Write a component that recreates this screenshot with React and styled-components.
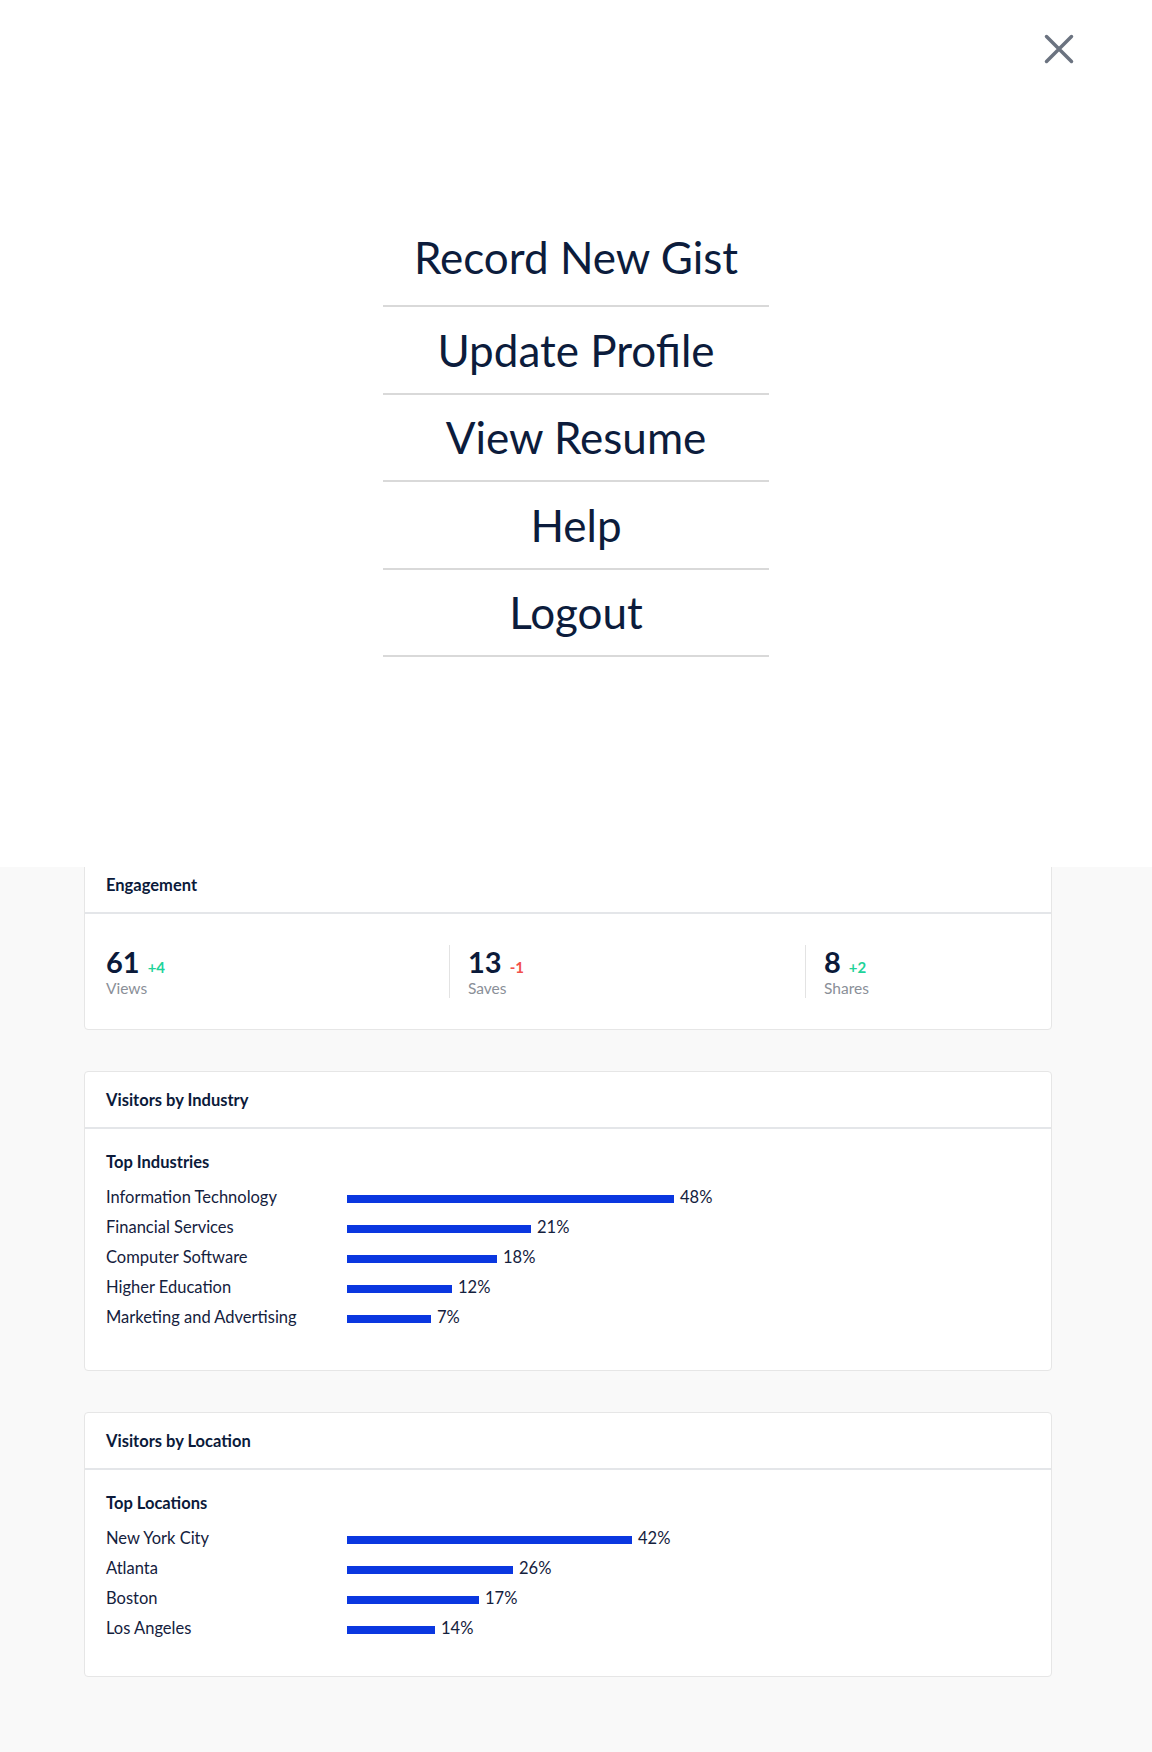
import React from "react";
import styled, { createGlobalStyle } from "styled-components";

const GlobalStyle = createGlobalStyle`
  html, body {
    margin: 0;
    padding: 0;
    background: #f9f9f9;
    font-family: Lato, "Open Sans", Arial, sans-serif;
    color: #0b1a3a;
  }
  * { box-sizing: border-box; }
`;

// Page + overlay menu
const Page = styled.div`
  position: relative;
  width: 1152px;
  min-height: 1752px;
  background: #f9f9f9;
`;

const MenuOverlay = styled.div`
  position: absolute;
  top: 0;
  left: 0;
  right: 0;
  height: 867px;
  background: #ffffff;
  z-index: 10;
  padding-top: 209px;
`;

const CloseButton = styled.button`
  position: absolute;
  top: 34px;
  right: 78px;
  width: 30px;
  height: 30px;
  padding: 0;
  border: none;
  background: none;
  cursor: pointer;
  display: flex;
  align-items: center;
  justify-content: center;
`;

const MenuList = styled.nav`
  width: 386px;
  margin: 0 auto;
  display: flex;
  flex-direction: column;
`;

const MenuItem = styled.a`
  height: 87.5px;
  display: flex;
  align-items: center;
  justify-content: center;
  border-bottom: 2px solid #d9d9d9;
  font-size: 44px;
  line-height: 1;
  color: #0c1c3c;
  text-decoration: none;
  cursor: pointer;

  &:first-child {
    height: 98px;
  }
`;

// Dashboard below
const Dashboard = styled.main`
  padding: 856px 100px 77px 84px;
  display: flex;
  flex-direction: column;
  gap: 41px;
`;

const Card = styled.section`
  background: #ffffff;
  border: 1px solid #e6e6e6;
  border-radius: 4px;
`;

const CardHeader = styled.header`
  height: 57px;
  display: flex;
  align-items: center;
  padding: 0 21px;
  border-bottom: 2px solid #e4e6e9;
  font-size: 16.5px;
  font-weight: 700;
  color: #0b1a3a;
`;

const StatsBody = styled.div`
  display: grid;
  grid-template-columns: 343px 356px 1fr;
  padding: 31px 21px 31px;
`;

const Stat = styled.div`
  height: 53px;
  padding: 2px 0 0 ${({ $divided }) => ($divided ? "18px" : "0")};
  border-left: ${({ $divided }) => ($divided ? "1px solid #e3e3e3" : "none")};
`;

const StatTop = styled.div`
  display: flex;
  align-items: baseline;
  gap: 8px;
  height: 30px;
`;

const StatNumber = styled.span`
  font-size: 29px;
  line-height: 30px;
  font-weight: 700;
  color: #0b1a3a;
`;

const StatDelta = styled.span`
  font-size: 15px;
  font-weight: 700;
  color: ${({ $negative }) => ($negative ? "#f2504c" : "#1fd39a")};
`;

const StatLabel = styled.div`
  margin-top: 3px;
  font-size: 15.5px;
  line-height: 16px;
  color: #8a8f98;
`;

const ChartBody = styled.div`
  padding: 23px 21px ${({ $padBottom }) => $padBottom}px;
`;

const ChartTitle = styled.div`
  font-size: 16.5px;
  line-height: 20px;
  font-weight: 700;
  color: #0b1a3a;
  margin-bottom: 10px;
`;

const BarRow = styled.div`
  display: grid;
  grid-template-columns: 241px 1fr;
  align-items: center;
  height: 30px;
  font-size: 16.5px;
  color: #14213d;
`;

const BarTrack = styled.div`
  display: flex;
  align-items: center;
  gap: 6px;
  margin-top: 3px;
`;

const Bar = styled.div`
  height: 8px;
  background: #0a37e0;
`;

const BarValue = styled.span`
  margin-top: -3px;
  font-size: 16.5px;
  color: #14213d;
`;

const menuItems = ["Record New Gist", "Update Profile", "View Resume", "Help", "Logout"];

const stats = [
  { value: "61", delta: "+4", label: "Views" },
  { value: "13", delta: "-1", label: "Saves", negative: true },
  { value: "8", delta: "+2", label: "Shares" },
];

const industries = [
  { name: "Information Technology", pct: "48%", width: 327 },
  { name: "Financial Services", pct: "21%", width: 184 },
  { name: "Computer Software", pct: "18%", width: 150 },
  { name: "Higher Education", pct: "12%", width: 105 },
  { name: "Marketing and Advertising", pct: "7%", width: 84 },
];

const locations = [
  { name: "New York City", pct: "42%", width: 285 },
  { name: "Atlanta", pct: "26%", width: 166 },
  { name: "Boston", pct: "17%", width: 132 },
  { name: "Los Angeles", pct: "14%", width: 88 },
];

const CloseIcon = () => (
  <svg width="30" height="30" viewBox="0 0 30 30" fill="none">
    <path d="M2.5 2.5L27.5 27.5M27.5 2.5L2.5 27.5" stroke="#6b7380" strokeWidth="3.5" strokeLinecap="round" />
  </svg>
);

const BarChartCard = ({ title, subtitle, rows, padBottom }) => (
  <Card>
    <CardHeader>{title}</CardHeader>
    <ChartBody $padBottom={padBottom}>
      <ChartTitle>{subtitle}</ChartTitle>
      {rows.map((row) => (
        <BarRow key={row.name}>
          <span>{row.name}</span>
          <BarTrack>
            <Bar style={{ width: row.width }} />
            <BarValue>{row.pct}</BarValue>
          </BarTrack>
        </BarRow>
      ))}
    </ChartBody>
  </Card>
);

const App = () => {
  return (
    <Page>
      <GlobalStyle />
      <MenuOverlay>
        <CloseButton aria-label="Close menu">
          <CloseIcon />
        </CloseButton>
        <MenuList>
          {menuItems.map((item) => (
            <MenuItem key={item}>{item}</MenuItem>
          ))}
        </MenuList>
      </MenuOverlay>

      <Dashboard>
        <Card>
          <CardHeader>Engagement</CardHeader>
          <StatsBody>
            {stats.map((s, i) => (
              <Stat key={s.label} $divided={i > 0}>
                <StatTop>
                  <StatNumber>{s.value}</StatNumber>
                  <StatDelta $negative={s.negative}>{s.delta}</StatDelta>
                </StatTop>
                <StatLabel>{s.label}</StatLabel>
              </Stat>
            ))}
          </StatsBody>
        </Card>

        <BarChartCard title="Visitors by Industry" subtitle="Top Industries" rows={industries} padBottom={38} />
        <BarChartCard title="Visitors by Location" subtitle="Top Locations" rows={locations} padBottom={33} />
      </Dashboard>
    </Page>
  );
};

export default App;
